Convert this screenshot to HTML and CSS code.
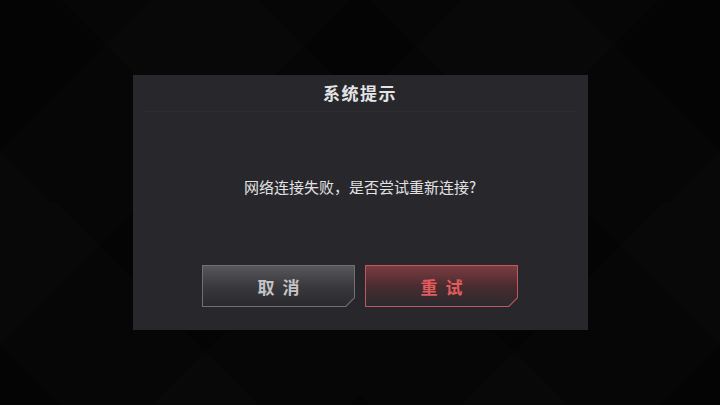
FILE: index.html
```html
<!DOCTYPE html>
<html lang="zh-CN">
<head>
<meta charset="utf-8">
<title>系统提示</title>
<link rel="stylesheet" href="styles.css">
</head>
<body>
<div class="screen">
  <div class="dialog">
    <div class="dialog-header">
      <h1 class="dialog-title">系统提示</h1>
    </div>
    <div class="dialog-divider"></div>
    <p class="dialog-message">网络连接失败，是否尝试重新连接?</p>
    <div class="dialog-actions">
      <button class="btn btn-cancel"><span class="btn-face">取消</span></button>
      <button class="btn btn-retry"><span class="btn-face">重试</span></button>
    </div>
  </div>
</div>
</body>
</html>
```

FILE: styles.css
```css
html, body {
  margin: 0;
  padding: 0;
  width: 720px;
  height: 405px;
  overflow: hidden;
  background: #040405;
}

.screen {
  width: 720px;
  height: 405px;
  display: flex;
  align-items: center;
  justify-content: center;
  font-family: "Noto Sans CJK SC", "Noto Sans", sans-serif;
  background-color: #040405;
  background-image:
    repeating-linear-gradient(45deg, rgba(255,255,255,0) 0px, rgba(255,255,255,0) 150px, rgba(255,255,255,0.008) 150px, rgba(255,255,255,0.008) 290px),
    repeating-linear-gradient(-45deg, rgba(255,255,255,0) 0px, rgba(255,255,255,0) 150px, rgba(255,255,255,0.008) 150px, rgba(255,255,255,0.008) 290px);
  background-position: 360px 202px;
}

.dialog {
  width: 455px;
  height: 255px;
  background: #28282c;
  display: flex;
  flex-direction: column;
  box-sizing: border-box;
}

.dialog-header {
  height: 36px;
  display: flex;
  align-items: center;
  justify-content: center;
}

.dialog-title {
  margin: 0;
  font-size: 17px;
  font-weight: 700;
  color: #e4e4e6;
  letter-spacing: 1.5px;
  line-height: 20px;
}

.dialog-divider {
  height: 1px;
  margin: 0 12px 0 11px;
  background: #2e2e32;
}

.dialog-message {
  margin: 64px 0 0;
  text-align: center;
  font-size: 15px;
  line-height: 22px;
  color: #e2e2e4;
}

.dialog-actions {
  margin-top: 67px;
  display: flex;
  justify-content: center;
  gap: 10px;
}

.btn {
  width: 153px;
  height: 42px;
  padding: 1px;
  border: 0;
  margin: 0;
  box-sizing: border-box;
  display: flex;
  clip-path: polygon(0 0, 100% 0, 100% calc(100% - 9px), calc(100% - 9px) 100%, 0 100%);
  font-family: inherit;
  cursor: pointer;
}

.btn-face {
  flex: 1;
  display: flex;
  align-items: center;
  justify-content: center;
  font-size: 17px;
  font-weight: 700;
  letter-spacing: 8px;
  text-indent: 8px;
  clip-path: polygon(0 0, 100% 0, 100% calc(100% - 8.6px), calc(100% - 8.6px) 100%, 0 100%);
}

.btn-cancel {
  background: #707074;
}

.btn-cancel .btn-face {
  background: linear-gradient(to bottom, #58585c 0%, #3a3a3e 50%, #2a2a2e 100%);
  color: #c4c4c6;
}

.btn-retry {
  background: #c2585c;
}

.btn-retry .btn-face {
  background: linear-gradient(to bottom, #7c3c40 0%, #4a2c30 50%, #2a2a2e 100%);
  color: #e25c5e;
}
```
